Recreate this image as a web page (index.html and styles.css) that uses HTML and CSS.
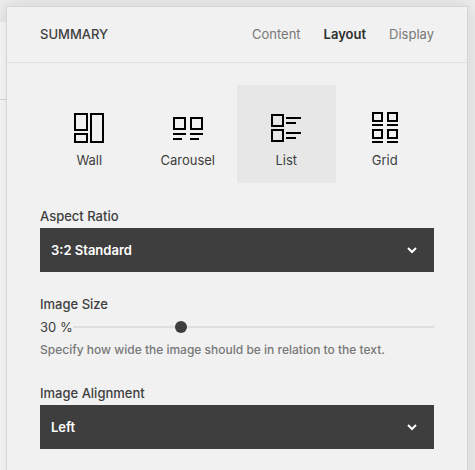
FILE: index.html
```
<!DOCTYPE html>
<html lang="en">
<head>
  <meta charset="UTF-8">
  <meta name="viewport" content="width=device-width, initial-scale=1.0">
  <title>Summary</title>
  <link rel="stylesheet" href="styles.css">
</head>
<body>

<div class="page-row"></div>
<div class="page-bar"></div>

<main class="panel">
  <header class="panel-header">
    <h1 class="panel-title">SUMMARY</h1>
    <nav class="tabs">
      <a href="#content" class="tab">Content</a>
      <a href="#layout" class="tab active">Layout</a>
      <a href="#display" class="tab">Display</a>
    </nav>
  </header>

  <form class="panel-body">
    <div class="layouts">
      <button type="button" class="layout">
        <svg class="layout-icon" width="30" height="32" viewBox="0 0 30 32">
          <rect x="1" y="2" width="12" height="16"/>
          <rect x="1" y="22" width="12" height="8"/>
          <rect x="17" y="2" width="12" height="28"/>
        </svg>
        Wall
      </button>
      <button type="button" class="layout">
        <svg class="layout-icon" width="30" height="32" viewBox="0 0 30 32">
          <rect x="1" y="6" width="11" height="11"/>
          <rect x="18" y="6" width="11" height="11"/>
          <path d="M0 22h13M0 27h9M17 22h13M17 27h9"/>
        </svg>
        Carousel
      </button>
      <button type="button" class="layout selected">
        <svg class="layout-icon" width="30" height="32" viewBox="0 0 30 32">
          <rect x="1" y="3" width="11" height="11"/>
          <rect x="1" y="18" width="11" height="11"/>
          <path d="M15 6h15M15 11h10M15 21h15M15 26h10"/>
        </svg>
        List
      </button>
      <button type="button" class="layout">
        <svg class="layout-icon" width="30" height="32" viewBox="0 0 30 32">
          <rect x="3" y="1" width="9" height="8"/>
          <rect x="18" y="1" width="9" height="8"/>
          <rect x="3" y="18" width="9" height="8"/>
          <rect x="18" y="18" width="9" height="8"/>
          <path d="M2 13h11M17 13h11M2 30h11M17 30h11"/>
        </svg>
        Grid
      </button>
    </div>

    <div class="field">
      <label class="field-label" for="aspect-ratio">Aspect Ratio</label>
      <div class="dropdown">
        <select id="aspect-ratio">
          <option>3:2 Standard</option>
        </select>
        <svg class="chevron" width="10" height="8" viewBox="0 0 10 8"><path d="M1 2l4 4 4-4"/></svg>
      </div>
    </div>

    <div class="field">
      <label class="field-label" for="image-size">Image Size</label>
      <div class="slider">
        <output for="image-size">30 %</output>
        <input type="range" id="image-size" min="1" max="100" value="30">
      </div>
      <p class="hint">Specify how wide the image should be in relation to the text.</p>
    </div>

    <div class="field">
      <label class="field-label" for="image-alignment">Image Alignment</label>
      <div class="dropdown">
        <select id="image-alignment">
          <option>Left</option>
        </select>
        <svg class="chevron" width="10" height="8" viewBox="0 0 10 8"><path d="M1 2l4 4 4-4"/></svg>
      </div>
    </div>
  </form>
</main>

</body>
</html>
```
FILE: styles.css
```
* {
  box-sizing: border-box;
}

body {
  margin: 0;
  padding: 6px 7px 0 6px;
  min-height: 100vh;
  display: flex;
  overflow: hidden;
  background: linear-gradient(to right, #f8f8f8 50%, #ececec 50%);
  color: #3e3e3e;
  font-family: Inter, "Liberation Sans", sans-serif;
  font-size: 13px;
  line-height: 20px;
}

/* the page that lies behind the panel */
.page-bar,
.page-row {
  position: absolute;
  top: 0;
  left: 0;
}

.page-bar {
  width: 100%;
  height: 22px;
  background-color: #ececec;
}

.page-row {
  width: 50%;
  height: 100px;
  border-bottom: 1px solid #d8d8d8;
}

.panel {
  position: relative;
  flex: 1;
  border: 1px solid #d6d6d6;
  border-bottom: 0;
  background-color: #f1f1f1;
  box-shadow: 0 0 14px rgba(0, 0, 0, 0.12);
}

.panel-header {
  display: flex;
  align-items: center;
  justify-content: space-between;
  padding: 17px 33px 18px;
  border-bottom: 1px solid #e0e0e0;
}

.panel-title {
  margin: 0;
  font-size: 13px;
  font-weight: 500;
}

.tabs {
  display: flex;
  gap: 23px;
}

.tab {
  color: #777;
  text-decoration: none;
}

.tab.active {
  color: #2e2e2e;
  font-weight: 600;
}

.panel-body {
  padding: 22px 33px;
}

.layouts {
  display: grid;
  grid-template-columns: repeat(4, 1fr);
  margin-bottom: 23px;
}

.layout {
  display: flex;
  flex-direction: column;
  align-items: center;
  gap: 6px;
  padding: 27px 0 13px;
  border: 0;
  background: none;
  color: #3e3e3e;
  font: inherit;
  cursor: pointer;
}

.layout.selected {
  background-color: #e7e7e7;
}

.layout-icon {
  fill: none;
  stroke: #000;
  stroke-width: 2;
}

.field {
  margin-bottom: 22px;
}

.field-label {
  display: block;
  margin-bottom: 2px;
  font-weight: 500;
}

.dropdown {
  position: relative;
}

.dropdown select {
  display: block;
  appearance: none;
  width: 100%;
  height: 44px;
  padding: 0 40px 0 11px;
  border: 0;
  border-radius: 0;
  background-color: #3e3e3e;
  color: #fff;
  font: inherit;
  font-weight: 600;
}

.chevron {
  position: absolute;
  top: 18px;
  right: 17px;
  fill: none;
  stroke: #fff;
  stroke-width: 2;
  pointer-events: none;
}

.slider {
  display: flex;
  align-items: center;
}

.slider output {
  white-space: nowrap;
}

.slider input {
  flex: 1;
  min-width: 0;
  height: 22px;
  margin: 0;
  appearance: none;
  background: none;
}

.slider input::-webkit-slider-runnable-track {
  height: 2px;
  background-color: #dedede;
}

.slider input::-webkit-slider-thumb {
  appearance: none;
  width: 12px;
  height: 12px;
  margin-top: -5px;
  border-radius: 50%;
  background-color: #3e3e3e;
}

.hint {
  margin: 2px 0 0;
  padding-bottom: 1px;
  color: #777;
  font-size: 12px;
  font-weight: 500;
  line-height: 20px;
}
```
